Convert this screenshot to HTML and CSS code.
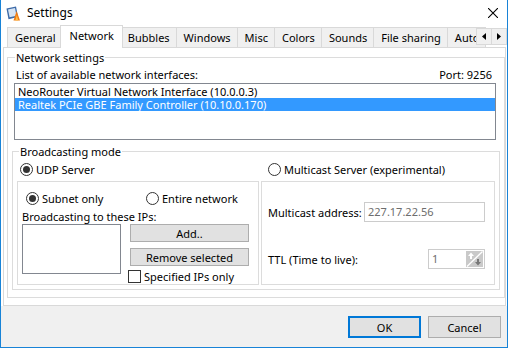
FILE: index.html
```html
<!DOCTYPE html>
<html lang="en">
<head>
    <meta charset="UTF-8">
    <title>Settings</title>
    <link rel="stylesheet" href="styles.css">
</head>
<body>
    <div class="window">
        <div class="titlebar">
            <svg class="app-icon" width="16" height="16" viewBox="0 0 16 16">
                <path d="M1.5 3.5 L11 1.5 L13 12 L3.5 14.2 Z" fill="#3c6aa8"/>
                <path d="M3 4.6 L10 3.1 L11.5 10.8 L4.6 12.3 Z" fill="#d6e4f3"/>
                <path d="M8.5 15.5 L11.6 6 L15 15.5 Z" fill="#f07b12"/>
                <path d="M10.4 15.5 L11.8 10 L13.2 15.5 Z" fill="#ffc04a"/>
            </svg>
            <span class="title">Settings</span>
            <svg class="close" width="10" height="10" viewBox="0 0 10 10">
                <path d="M0 0 L10 10 M10 0 L0 10" stroke="#000" stroke-width="1.1"/>
            </svg>
        </div>

        <div class="tabs">
            <div class="tab">General</div>
            <div class="tab active">Network</div>
            <div class="tab">Bubbles</div>
            <div class="tab">Windows</div>
            <div class="tab">Misc</div>
            <div class="tab">Colors</div>
            <div class="tab">Sounds</div>
            <div class="tab">File sharing</div>
            <div class="tab">Auto</div>
            <div class="tab-scroll">
                <span><svg width="4" height="7" viewBox="0 0 4 7"><path d="M4 0 V7 L0 3.5 Z" fill="#000"/></svg></span>
                <span><svg width="4" height="7" viewBox="0 0 4 7"><path d="M0 0 V7 L4 3.5 Z" fill="#000"/></svg></span>
            </div>
        </div>

        <div class="page">
            <fieldset class="group net">
                <legend>Network settings</legend>
                <div class="list-head">
                    <span>List of available network interfaces:</span>
                    <span>Port: 9256</span>
                </div>
                <div class="listbox ifaces">
                    <div class="item">NeoRouter Virtual Network Interface (10.0.0.3)</div>
                    <div class="item selected">Realtek PCIe GBE Family Controller (10.10.0.170)</div>
                </div>

                <fieldset class="group mode">
                    <legend>Broadcasting mode</legend>
                    <div class="mode-cols">
                        <div class="col udp-col">
                            <div class="radio-row">
                                <label class="radio"><span class="radio-dot checked"></span>UDP Server</label>
                            </div>
                            <div class="panel udp">
                                <div class="scope">
                                    <label class="radio"><span class="radio-dot checked"></span>Subnet only</label>
                                    <label class="radio"><span class="radio-dot"></span>Entire network</label>
                                </div>
                                <div class="caption">Broadcasting to these IPs:</div>
                                <div class="ips">
                                    <div class="listbox ip-list"></div>
                                    <div class="ip-actions">
                                        <button class="btn small">Add..</button>
                                        <button class="btn small">Remove selected</button>
                                        <label class="check"><span class="check-box"></span>Specified IPs only</label>
                                    </div>
                                </div>
                            </div>
                        </div>
                        <div class="col multi-col">
                            <div class="radio-row">
                                <label class="radio"><span class="radio-dot"></span>Multicast Server (experimental)</label>
                            </div>
                            <div class="panel multicast">
                                <div class="field">
                                    <span>Multicast address:</span>
                                    <div class="input addr">227.17.22.56</div>
                                </div>
                                <div class="field ttl">
                                    <span>TTL (Time to live):</span>
                                    <div class="input spin">
                                        <span>1</span>
                                        <svg width="17" height="16" viewBox="0 0 17 16">
                                            <rect width="17" height="16" fill="#c9c9c9"/>
                                            <path d="M1 15.5 L16.5 0.5" stroke="#fff" stroke-width="1.3"/>
                                            <path d="M5 1.5 L8 5 H6 V8 H4 V5 H2 Z" fill="#fff"/>
                                            <path d="M12 14.5 L9 11 H11 V8 H13 V11 H15 Z" fill="#777"/>
                                        </svg>
                                    </div>
                                </div>
                            </div>
                        </div>
                    </div>
                </fieldset>
            </fieldset>
        </div>

        <div class="footer">
            <button class="btn default">OK</button>
            <button class="btn">Cancel</button>
        </div>
    </div>
</body>
</html>
```

FILE: styles.css
```css
* {
    box-sizing: border-box;
}
body {
    margin: 0;
    font-family: "Noto Sans", sans-serif;
    font-size: 11px;
    line-height: 15px;
    color: #000;
    background: #fff;
}
.window {
    width: 508px;
    height: 348px;
    border: 1px solid #1883d7;
    border-top: none;
    background: #fff;
    display: flex;
    flex-direction: column;
}

/* title bar */
.titlebar {
    flex: none;
    height: 25px;
    display: flex;
    align-items: center;
    padding-left: 4px;
}
.app-icon {
    margin-right: 6px;
}
.title {
    flex: 1;
    font-size: 12px;
}
.close {
    margin-right: 9px;
}

/* tabs */
.tabs {
    flex: none;
    position: relative;
    display: flex;
    align-items: flex-end;
    height: 23px;
    margin-bottom: -1px;
    padding-left: 6px;
    overflow: hidden;
    white-space: nowrap;
}
.tab {
    flex: none;
    height: 20px;
    margin-bottom: 1px;
    margin-right: -1px;
    padding: 0 6px 0 7px;
    line-height: 19px;
    background: #f0f0f0;
    border: 1px solid #d9d9d9;
    border-bottom: none;
}
.tab.active {
    position: relative;
    z-index: 1;
    height: 23px;
    margin: 0 -3px 0 -2px;
    padding: 0 8px 0 9px;
    background: #fff;
}
.tab-scroll {
    position: absolute;
    z-index: 2;
    right: 0;
    top: 3px;
    display: flex;
}
.tab-scroll span {
    width: 16px;
    height: 17px;
    display: flex;
    align-items: center;
    justify-content: center;
    background: #f0f0f0;
    border: 1px solid #d9d9d9;
}
.tab-scroll span + span {
    margin-left: -1px;
}

/* tab page */
.page {
    flex: none;
    display: flex;
    flex-direction: column;
    margin-left: 2px;
    width: 503px;
    height: 259px;
    padding: 0 0 7px 3px;
    border: 1px solid #d9d9d9;
    background: #fff;
}
.group {
    display: flex;
    flex-direction: column;
    min-width: 0;
    margin: 0;
    padding: 0 4px 4px;
    border: 1px solid #dcdcdc;
}
.group legend {
    padding: 0 1px;
}
.net {
    flex: 1;
    margin-top: 2px;
}
.net > legend {
    margin-left: 3px;
}
.list-head {
    display: flex;
    justify-content: space-between;
    margin-top: 2px;
    padding: 0 8px 0 4px;
}
.listbox {
    border: 1px solid #828790;
    background: #fff;
}
.ifaces {
    height: 57px;
    margin: 1px 4px 0 2px;
    padding-top: 1px;
}
.item {
    height: 13px;
    line-height: 13px;
    padding-left: 3px;
    white-space: nowrap;
}
.item.selected {
    background: #3399ff;
    color: #fff;
}

.mode {
    flex: 1;
    margin-top: 4px;
}
.mode > legend {
    margin-left: 2px;
}
.mode-cols {
    flex: 1;
    display: grid;
    grid-template-columns: 242px 234px;
    column-gap: 2px;
}
.col {
    display: flex;
    flex-direction: column;
}
.radio-row {
    height: 21px;
    display: flex;
    align-items: center;
}
.udp-col .radio-row {
    padding-left: 3px;
}
.multi-col .radio-row {
    padding-left: 7px;
}
.panel {
    flex: 1;
    margin-top: 1px;
    border: 1px solid #dcdcdc;
}

.radio,
.check {
    display: inline-flex;
    align-items: center;
    gap: 3px;
    white-space: nowrap;
}
.radio-dot,
.check-box {
    flex: none;
    width: 13px;
    height: 13px;
    border: 1px solid #333;
    background: #fff;
}
.radio-dot {
    border-radius: 50%;
    display: flex;
    align-items: center;
    justify-content: center;
}
.radio-dot.checked::after {
    content: "";
    width: 7px;
    height: 7px;
    border-radius: 50%;
    background: #333;
}

/* udp panel */
.udp {
    padding: 0 9px 0 4px;
}
.scope {
    display: grid;
    grid-template-columns: 120px auto;
    align-items: center;
    height: 20px;
    margin-top: 6px;
    padding-left: 4px;
}
.caption {
    margin-top: 1px;
}
.ips {
    display: flex;
    gap: 9px;
}
.ip-list {
    width: 99px;
    height: 50px;
}
.ip-actions {
    display: flex;
    flex-direction: column;
    width: 119px;
}
.btn {
    font: inherit;
    color: #000;
    background: #e1e1e1;
    border: 1px solid #adadad;
    padding: 0;
    margin: 0;
}
.btn.small {
    height: 18px;
    line-height: 15px;
}
.btn.small + .btn.small {
    margin-top: 6px;
}
.check {
    margin: 3px 0 0 -2px;
}

/* multicast panel */
.multicast {
    padding: 20px 9px 0 6px;
}
.field {
    display: flex;
    align-items: center;
    justify-content: space-between;
    white-space: nowrap;
}
.field.ttl {
    margin-top: 27px;
}
.input {
    height: 20px;
    border: 1px solid #cccccc;
    background: #fff;
    color: #6d6d6d;
    padding-left: 3px;
    line-height: 18px;
}
.addr {
    width: 121px;
}
.spin {
    width: 57px;
    display: flex;
    align-items: center;
    justify-content: space-between;
    padding-right: 1px;
}

/* bottom buttons */
.footer {
    flex: 1;
    display: flex;
    justify-content: flex-end;
    align-items: flex-start;
    gap: 7px;
    padding: 10px 6px 0 0;
    background: #f0f0f0;
}
.footer .btn {
    width: 73px;
    height: 22px;
}
.btn.default {
    border: 2px solid #0078d7;
}
```
